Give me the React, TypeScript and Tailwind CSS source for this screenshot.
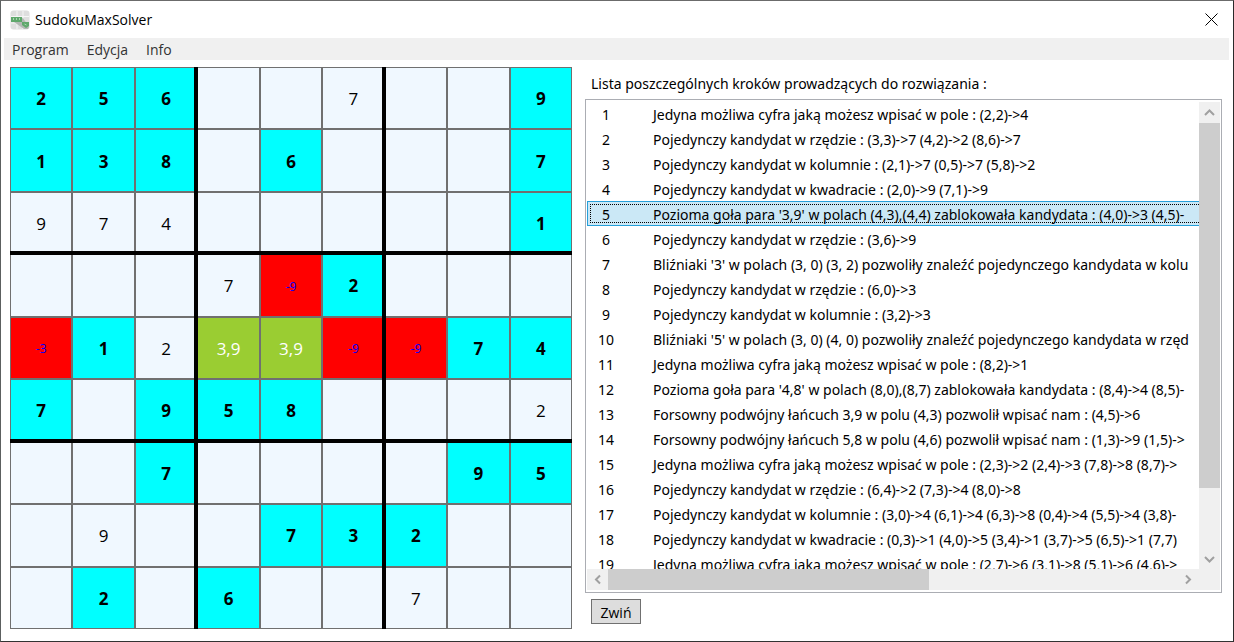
import React, { useState } from "react";

type Kind = "given" | "found" | "removed" | "pair" | "empty";

const board: string[] = [
  "g2 g5 g6 . . 7 . . g9",
  "g1 g3 g8 . g6 . . . g7",
  "9 7 4 . . . . . g1",
  ". . . 7 r-9 g2 . . .",
  "r-3 g1 2 p3,9 p3,9 r-9 r-9 g7 g4",
  "g7 . g9 g5 g8 . . . 2",
  ". . g7 . . . . g9 g5",
  ". 9 . . g7 g3 g2 . .",
  ". g2 . g6 . . 7 . .",
];

const steps: string[] = [
  "Jedyna możliwa cyfra jaką możesz wpisać w pole : (2,2)->4",
  "Pojedynczy kandydat w rzędzie : (3,3)->7 (4,2)->2 (8,6)->7",
  "Pojedynczy kandydat w kolumnie : (2,1)->7 (0,5)->7 (5,8)->2",
  "Pojedynczy kandydat w kwadracie : (2,0)->9 (7,1)->9",
  "Pozioma goła para '3,9' w polach (4,3),(4,4) zablokowała kandydata : (4,0)->3 (4,5)-",
  "Pojedynczy kandydat w rzędzie : (3,6)->9",
  "Bliźniaki '3' w polach (3, 0) (3, 2) pozwoliły znaleźć pojedynczego kandydata w kolu",
  "Pojedynczy kandydat w rzędzie : (6,0)->3",
  "Pojedynczy kandydat w kolumnie : (3,2)->3",
  "Bliźniaki '5' w polach (3, 0) (4, 0) pozwoliły znaleźć pojedynczego kandydata w rzęd",
  "Jedyna możliwa cyfra jaką możesz wpisać w pole : (8,2)->1",
  "Pozioma goła para '4,8' w polach (8,0),(8,7) zablokowała kandydata : (8,4)->4 (8,5)-",
  "Forsowny podwójny łańcuch 3,9 w polu (4,3) pozwolił wpisać nam : (4,5)->6",
  "Forsowny podwójny łańcuch 5,8 w polu (4,6) pozwolił wpisać nam : (1,3)->9 (1,5)->",
  "Jedyna możliwa cyfra jaką możesz wpisać w pole : (2,3)->2 (2,4)->3 (7,8)->8 (8,7)->",
  "Pojedynczy kandydat w rzędzie : (6,4)->2 (7,3)->4 (8,0)->8",
  "Pojedynczy kandydat w kolumnie : (3,0)->4 (6,1)->4 (6,3)->8 (0,4)->4 (5,5)->4 (3,8)-",
  "Pojedynczy kandydat w kwadracie : (0,3)->1 (4,0)->5 (3,4)->1 (3,7)->5 (6,5)->1 (7,7)",
  "Jedyna możliwa cyfra jaką możesz wpisać w pole : (2,7)->6 (3,1)->8 (5,1)->6 (4,6)->",
];

const kindStyles: Record<Kind, string> = {
  given: "bg-[#00ffff] text-[17px] font-bold text-black",
  found: "bg-[#f0f8ff] text-[17px] text-black",
  removed: "bg-[#ff0000] text-xs text-[#0000ff]",
  pair: "bg-[#9acd32] text-[17px] text-white",
  empty: "bg-[#f0f8ff]",
};

function parseCell(token: string): { kind: Kind; value: string } {
  if (token === ".") return { kind: "empty", value: "" };
  if (token[0] === "g") return { kind: "given", value: token.slice(1) };
  if (token[0] === "r") return { kind: "removed", value: token.slice(1) };
  if (token[0] === "p") return { kind: "pair", value: token.slice(1) };
  return { kind: "found", value: token };
}

function AppIcon() {
  return (
    <svg viewBox="0 0 20 20" className="size-5" aria-hidden="true">
      <rect x="0.5" y="0.5" width="19" height="19" rx="3" fill="#dedede" />
      <path d="M7 1v18M13 1v18M1 6.500h18M1 13h18" stroke="#f6f6f6" />
      <path d="M4 12l10 7h4l1-2-6-9z" fill="#b3b8b4" />
      <path d="M1 7h11v5H1z" fill="#5fa86c" />
      <path d="M12 12h7v4l-3 2-4-3z" fill="#5fa86c" />
      <path d="M3.500 8v2M6.500 8v2M9.500 8v2M14.500 14l2 1" stroke="#a9d4b0" />
    </svg>
  );
}

function Arrow({ d }: { d: string }) {
  return (
    <svg viewBox="0 0 17 17" className="size-[17px]" fill="none" stroke="#a0a0a0" strokeWidth="2" aria-hidden="true">
      <path d={d} />
    </svg>
  );
}

function Board() {
  return (
    <div className="relative aspect-square">
      <div className="grid size-full grid-cols-9 grid-rows-9">
        {board.flatMap((row, r) =>
          row.split(" ").map((token, c) => {
            const { kind, value } = parseCell(token);
            return (
              <button
                key={`${r}-${c}`}
                aria-label={`Pole ${r},${c} ${value}`}
                className={`flex items-center justify-center border border-[#707070] pt-0.5 ${kindStyles[kind]}`}
              >
                {value}
              </button>
            );
          }),
        )}
      </div>
      <div className="pointer-events-none absolute inset-y-0 left-1/3 -ml-[3px] w-1 bg-black" />
      <div className="pointer-events-none absolute inset-y-0 left-2/3 -ml-[3px] w-1 bg-black" />
      <div className="pointer-events-none absolute inset-x-0 top-1/3 -mt-[3px] h-1 bg-black" />
      <div className="pointer-events-none absolute inset-x-0 top-2/3 -mt-[3px] h-1 bg-black" />
    </div>
  );
}

function StepList() {
  const [selected, setSelected] = useState(4);
  return (
    <div className="grid min-h-0 flex-1 grid-cols-[minmax(0,1fr)_21px] grid-rows-[minmax(0,1fr)_21px] border border-[#abadb3] p-px pb-0.5">
      <ul className="h-0 min-h-full overflow-hidden font-['Noto_Sans','Open_Sans',sans-serif]">
        {steps.map((text, i) => (
          <li key={i}>
            <button
              onClick={() => setSelected(i)}
              aria-pressed={i === selected}
              className={`flex h-[25px] w-full border border-r-0 p-0.5 pr-0 text-left ${
                i === selected ? "border-[#26a0da] bg-[#cbe8f6]" : "border-transparent"
              }`}
            >
              <span
                className={`flex h-full w-full items-start border border-r-0 border-dotted whitespace-nowrap ${
                  i === selected ? "border-black" : "border-transparent"
                }`}
              >
                <span className="w-[30px] shrink-0 text-center leading-[19px]">{i + 1}</span>
                <span className="ml-8 shrink-0 leading-[19px]">{text}</span>
              </span>
            </button>
          </li>
        ))}
      </ul>
      <div className="mt-px flex flex-col items-center bg-[#f0f0f0]">
        <button aria-label="W górę" className="flex h-[21px] items-center">
          <Arrow d="M4 11l4.500-4.500L13 11" />
        </button>
        <div className="h-[365px] w-full bg-[#cdcdcd]" />
        <button aria-label="W dół" className="mt-auto flex h-[21px] items-center">
          <Arrow d="M4 7l4.500 4.500L13 7" />
        </button>
      </div>
      <div className="flex items-center bg-[#f0f0f0]">
        <button aria-label="W lewo" className="flex w-[21px] justify-center">
          <Arrow d="M11 4.500L7 8.500l4 4" />
        </button>
        <div className="h-full w-[321px] bg-[#cdcdcd]" />
        <button aria-label="W prawo" className="ml-auto flex w-[21px] justify-center">
          <Arrow d="M6 4.500l4 4-4 4" />
        </button>
      </div>
      <div className="bg-[#f0f0f0]" />
    </div>
  );
}

export default function App() {
  return (
    <div className="flex min-h-screen flex-col border border-t-[#6b6b6b] border-r-[#2a2a2a] border-b-[#333333] border-l-[#5c6060] bg-white font-['Open_Sans','Noto_Sans',sans-serif] text-sm text-black">
      <header className="flex h-[37px] items-center px-[9px]">
        <AppIcon />
        <h1 className="ml-[5px] pt-px">SudokuMaxSolver</h1>
        <button aria-label="Zamknij" className="ml-auto p-1.5">
          <svg viewBox="0 0 13 13" className="size-[13px]" stroke="#000" fill="none" aria-hidden="true">
            <path d="M.5.5l12 12M12.500.5l-12 12" />
          </svg>
        </button>
      </header>
      <nav className="mr-1 ml-[3px] flex h-[22px] items-center gap-[18px] bg-[#f0f0f0] px-2 pt-0.5 text-[#333333]">
        <button>Program</button>
        <button>Edycja</button>
        <button>Info</button>
      </nav>
      <main className="grid grid-cols-[562fr_637fr] gap-[13px] pt-[7px] pr-[11px] pl-[9px]">
        <Board />
        <section className="flex min-w-0 flex-col">
          <h2 className="flex h-8 items-center pt-0.5 pl-1.5 font-['Noto_Sans','Open_Sans',sans-serif]">
            Lista poszczególnych kroków prowadzących do rozwiązania :
          </h2>
          <StepList />
          <div className="flex pt-1.5 pb-[5px] pl-1.5">
            <button className="flex h-[25px] w-[50px] items-center justify-center border border-[#707070] bg-[#dddddd] pt-0.5">
              Zwiń
            </button>
          </div>
        </section>
      </main>
    </div>
  );
}
